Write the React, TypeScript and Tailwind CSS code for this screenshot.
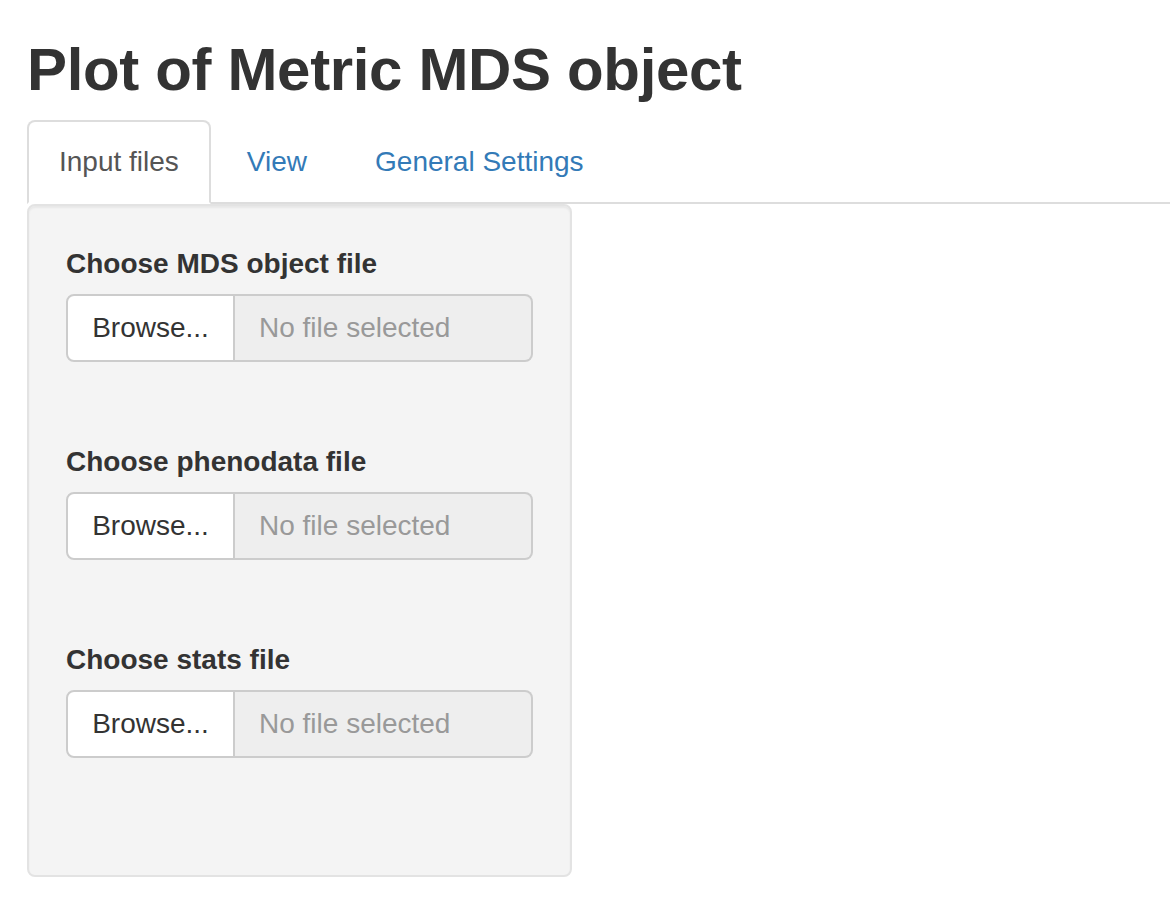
import React from "react";

const font = { fontFamily: '"Liberation Sans", Arial, Helvetica, sans-serif' };

function FileInput({ label }: { label: string }) {
  return (
    <div className="mb-[80px]">
      <div className="text-[28px] leading-[40px] font-bold text-[#333] mb-[10px]">{label}</div>
      <div className="flex h-[68px]">
        <div className="w-[169px] shrink-0 bg-white border-2 border-[#ccc] rounded-l-[8px] flex items-center justify-center text-[28px] leading-[40px] text-[#333]">
          Browse...
        </div>
        <div className="flex-1 bg-[#eee] border-y-2 border-r-2 border-[#ccc] rounded-r-[8px] flex items-center pl-[24px] text-[28px] leading-[40px] text-[#999]">
          No file selected
        </div>
      </div>
    </div>
  );
}

export default function App() {
  return (
    <div className="min-h-[922px] bg-white pl-[27px]" style={font}>
      <h1 className="pt-[37px] text-[60px] leading-[66px] font-bold text-[#333] tracking-[-0.35px]">
        Plot of Metric MDS object
      </h1>
      <ul className="mt-[17px] flex border-b-2 border-[#ddd]">
        <li className="mb-[-2px] mr-[4px]">
          <div className="px-[30px] py-[20px] text-[28px] leading-[40px] text-[#555] bg-white border-2 border-[#ddd] border-b-transparent rounded-t-[8px]">
            Input files
          </div>
        </li>
        <li className="mb-[-2px] mr-[4px]">
          <div className="px-[30px] py-[20px] text-[28px] leading-[40px] text-[#337ab7] border-2 border-transparent rounded-t-[8px]">
            View
          </div>
        </li>
        <li className="mb-[-2px] mr-[4px]">
          <div className="px-[30px] py-[20px] text-[28px] leading-[40px] text-[#337ab7] border-2 border-transparent rounded-t-[8px]">
            General Settings
          </div>
        </li>
      </ul>
      <div className="w-[545px] bg-[#f4f4f4] border-2 border-[#e3e3e3] rounded-[8px] px-[37px] pt-[38px] pb-[37px] shadow-[inset_0_2px_2px_rgba(0,0,0,0.05)]">
        <FileInput label="Choose MDS object file" />
        <FileInput label="Choose phenodata file" />
        <FileInput label="Choose stats file" />
      </div>
    </div>
  );
}
